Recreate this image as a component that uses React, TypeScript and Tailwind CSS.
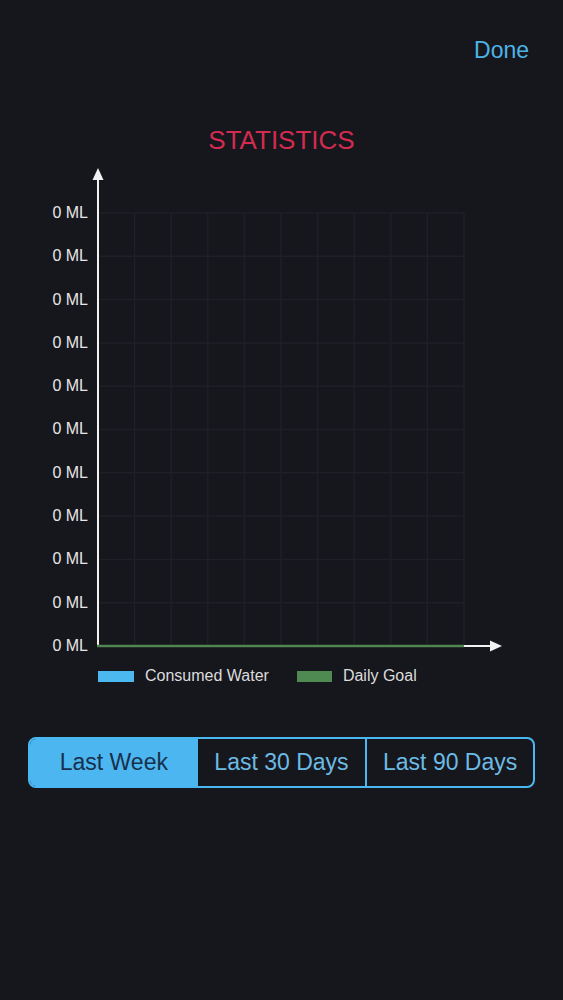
const labels = Array.from({ length: 11 }, () => "0 ML");

function Chart() {
  const rows = Array.from({ length: 11 }, (_, i) => 52 + i * 43.3);
  const cols = Array.from({ length: 10 }, (_, i) => 8 + (i + 1) * 36.6);
  return (
    <svg width="420" height="495" viewBox="0 0 420 495" className="block">
      {rows.slice(0, 10).map((y) => (
        <line key={`h${y}`} x1="8" x2="374" y1={y} y2={y} stroke="#1f1f28" strokeWidth="1.5" />
      ))}
      {cols.map((x) => (
        <line key={`v${x}`} x1={x} x2={x} y1="52" y2="485" stroke="#1f1f28" strokeWidth="1.5" />
      ))}
      {/* y axis */}
      <line x1="8" x2="8" y1="14" y2="486" stroke="#f2f2f2" strokeWidth="2" />
      <polygon points="8,7 2.5,19 13.5,19" fill="#f2f2f2" />
      {/* x axis */}
      <line x1="7" x2="374" y1="485" y2="485" stroke="#4e8550" strokeWidth="2.5" />
      <line x1="374" x2="404" y1="485" y2="485" stroke="#f2f2f2" strokeWidth="2" />
      <polygon points="412,485 400,479.5 400,490.5" fill="#f2f2f2" />
    </svg>
  );
}

export default function App() {
  return (
    <div
      className="w-full h-[1000px] bg-[#16161d] overflow-hidden"
      style={{ fontFamily: '"Liberation Sans", Arial, sans-serif' }}
    >
      <div className="flex justify-end pt-[37px] pr-[34px]">
        <span className="text-[23px] leading-[26px] font-medium text-[#4db3e6]">Done</span>
      </div>

      <h1 className="mt-[63px] text-center text-[26px] leading-[28px] text-[#d22b50]">STATISTICS</h1>

      <div className="mt-[7px] flex items-start">
        <div className="mt-[43px] w-[88px] h-[451px] flex flex-col justify-between">
          {labels.map((l, i) => (
            <span key={i} className="text-right text-[16px] leading-[18px] text-[#e6e6e6]">
              {l}
            </span>
          ))}
        </div>
        <div className="ml-[2px]">
          <Chart />
        </div>
      </div>

      <div className="mt-[10px] pl-[98px] flex items-center h-[20px]">
        <span className="w-[36px] h-[11px] bg-[#4bb9ef]" />
        <span className="ml-[11px] text-[16px] text-[#dcdcdc]">Consumed Water</span>
        <span className="ml-[28px] w-[35px] h-[11px] bg-[#4e8a52]" />
        <span className="ml-[11px] text-[16px] text-[#dcdcdc]">Daily Goal</span>
      </div>

      <div className="mt-[51px] mx-[28px] h-[51px] grid grid-cols-3 border-2 border-[#4ab8f0] rounded-lg overflow-hidden">
        <div className="flex items-center justify-center bg-[#4cb6f1] text-[23px] text-[#18304a]">
          Last Week
        </div>
        <div className="flex items-center justify-center text-[23px] text-[#6cbbe4]">
          Last 30 Days
        </div>
        <div className="flex items-center justify-center border-l-2 border-[#4ab8f0] text-[23px] text-[#6cbbe4]">
          Last 90 Days
        </div>
      </div>
    </div>
  );
}
